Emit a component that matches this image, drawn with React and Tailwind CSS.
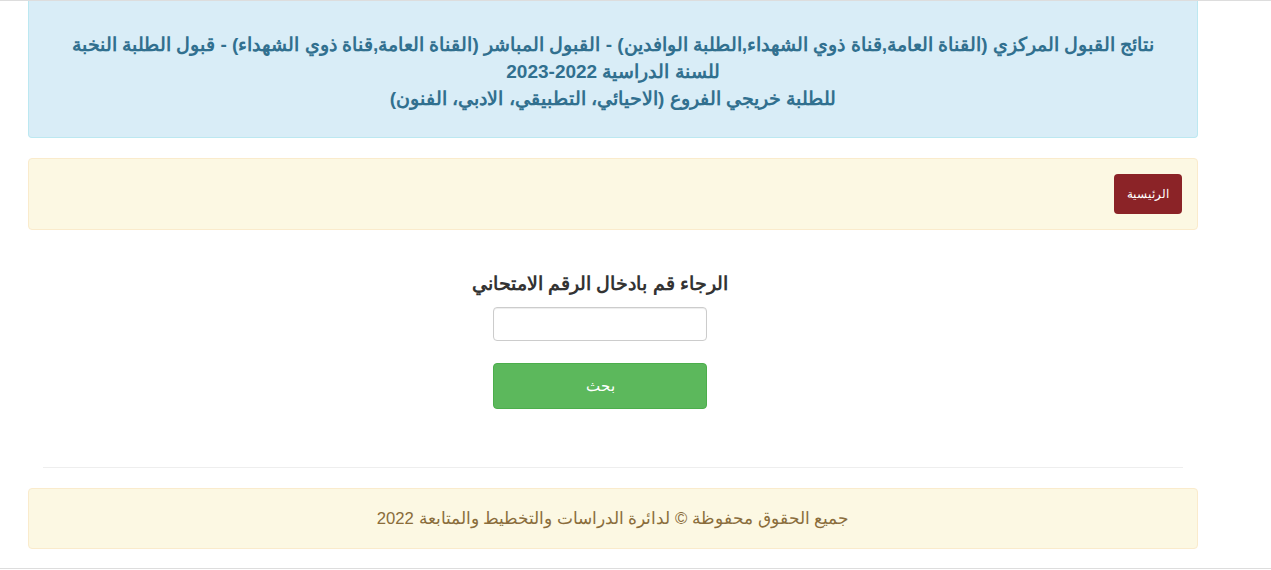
export default function App() {
  return (
    <div
      className="min-h-[570px] w-[1271px] bg-white text-[#333]"
      style={{ fontFamily: '"Liberation Sans", Arial, sans-serif' }}
    >
      <div className="h-px bg-[#dddddd]" />

      <div className="ml-[28px] w-[1170px]">
        {/* header alert */}
        <div
          dir="rtl"
          className="border border-t-0 border-[#bce8f1] bg-[#d9edf7] text-[#31708f] rounded-b-[4px] pt-[30px] pb-[25px] px-[10px] text-center text-[19px] font-bold leading-[27px]"
        >
          <div className="whitespace-nowrap">
            نتائج القبول المركزي (القناة العامة,قناة ذوي الشهداء,الطلبة الوافدين) - القبول المباشر (القناة العامة,قناة ذوي الشهداء) - قبول الطلبة النخبة
          </div>
          <div>للسنة الدراسية 2022-2023</div>
          <div>للطلبة خريجي الفروع (الاحيائي، التطبيقي، الادبي، الفنون)</div>
        </div>

        {/* nav alert */}
        <div
          dir="rtl"
          className="mt-[20px] flex h-[72px] items-center rounded-[4px] border border-[#faebcc] bg-[#fcf8e3] px-[15px]"
        >
          <a
            href="/"
            className="flex h-[40px] w-[68px] items-center justify-center rounded-[4px] bg-[#8b2327] text-[12px] text-white"
          >
            الرئيسية
          </a>
        </div>

        {/* form */}
        <div dir="rtl" className="ml-[372px] mt-[43px] w-[400px] text-center">
          <h3 className="text-[18.8px] font-bold leading-[22px] text-[#333]">
            الرجاء قم بادخال الرقم الامتحاني
          </h3>
          <input
            type="text"
            className="mx-auto mt-[12px] block h-[34px] w-[214px] rounded-[4px] border border-[#cccccc] bg-white px-3 shadow-[inset_0_1px_1px_rgba(0,0,0,0.075)] outline-none"
          />
          <button
            type="button"
            className="mx-auto mt-[22px] block h-[46px] w-[214px] rounded-[4px] border border-[#4cae4c] bg-[#5cb85c] text-[15px] text-white"
          >
            بحث
          </button>
        </div>

        <div className="mx-[15px] mt-[58px] h-px bg-[#eeeeee]" />

        {/* footer alert */}
        <div
          dir="rtl"
          className="mt-[20px] flex h-[61px] items-center justify-center rounded-[4px] border border-[#faebcc] bg-[#fcf8e3] text-[16.7px] text-[#8a6d3b]"
        >
          جميع الحقوق محفوظة © لدائرة الدراسات والتخطيط والمتابعة 2022
        </div>
      </div>

      <div className="mt-[19px] h-px bg-[#dddddd]" />
    </div>
  );
}
